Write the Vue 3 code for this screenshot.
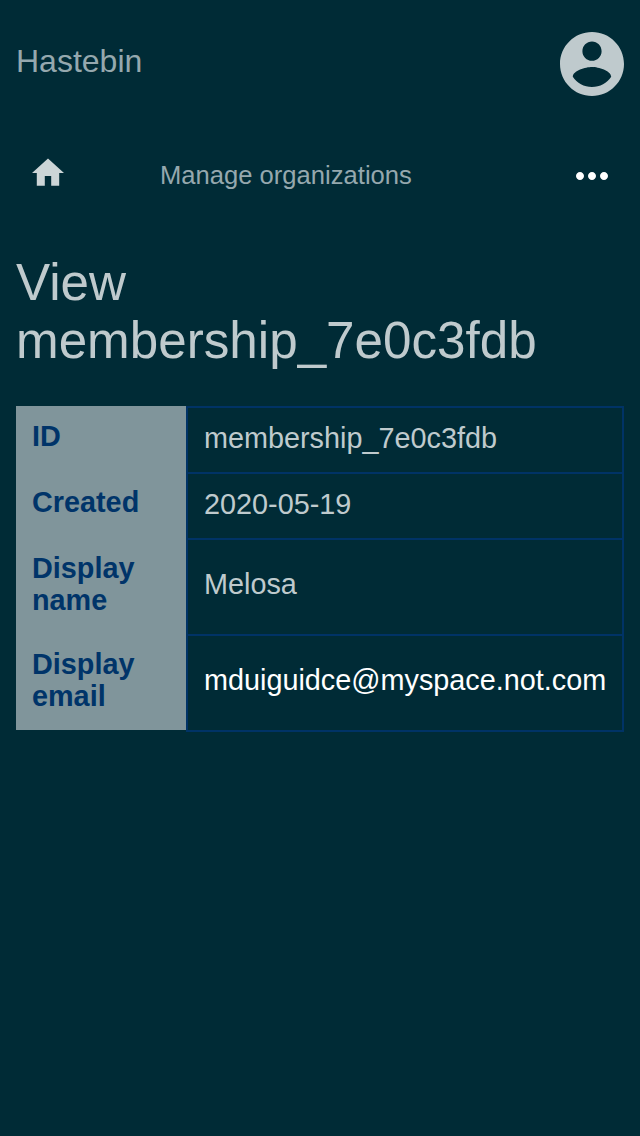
<script setup>
const rows = [
  { label: 'ID', value: 'membership_7e0c3fdb' },
  { label: 'Created', value: '2020-05-19' },
  { label: 'Display name', value: 'Melosa', tall: true },
  { label: 'Display email', value: 'mduiguidce@myspace.not.com', tall: true, link: true },
]
</script>

<template>
  <div class="page">
    <header class="top">
      <span class="brand">Hastebin</span>
      <svg class="account" viewBox="2 2 20 20">
        <path d="M12 2C6.48 2 2 6.48 2 12s4.48 10 10 10 10-4.48 10-10S17.52 2 12 2zm0 3c1.66 0 3 1.34 3 3s-1.34 3-3 3-3-1.34-3-3 1.34-3 3-3zm0 14.2c-2.5 0-4.71-1.28-6-3.22.03-1.99 4-3.08 6-3.08 1.99 0 5.97 1.09 6 3.08-1.29 1.94-3.5 3.22-6 3.22z" />
      </svg>
    </header>
    <nav class="nav">
      <svg class="home" viewBox="2 2.7 20 17.5"><path d="M10 20v-6h4v6h5v-8h3L12 3 2 12h3v8z" /></svg>
      <span class="crumb">Manage organizations</span>
      <svg class="more" viewBox="4 10 16 4"><path d="M6 10c-1.1 0-2 .9-2 2s.9 2 2 2 2-.9 2-2-.9-2-2-2zm12 0c-1.1 0-2 .9-2 2s.9 2 2 2 2-.9 2-2-.9-2-2-2zm-6 0c-1.1 0-2 .9-2 2s.9 2 2 2 2-.9 2-2-.9-2-2-2z" /></svg>
    </nav>
    <h1>View membership_7e0c3fdb</h1>
    <dl class="details">
      <template v-for="row in rows" :key="row.label">
        <dt>{{ row.label }}</dt>
        <dd :class="{ link: row.link, tall: row.tall }">{{ row.value }}</dd>
      </template>
    </dl>
  </div>
</template>

<style>
body { background: #002b36; }
</style>

<style scoped>
.page {
  box-sizing: border-box;
  min-height: 1136px;
  padding: 32px 16px 0;
  background: #002b36;
  color: #bfcacd;
  font-family: "Liberation Sans", Arial, sans-serif;
}
.top { display: flex; justify-content: space-between; height: 64px; }
.brand { font-size: 32px; line-height: 58px; color: #95a8ae; }
.account { width: 64px; height: 64px; fill: #bfcacd; }
.nav { display: flex; align-items: center; height: 64px; margin-top: 48px; padding: 0 16px; }
.home { width: 32px; height: 28px; margin-top: -8px; fill: #ccd5d7; }
.crumb { flex: 1; margin-left: 96px; padding-bottom: 2px; font-size: 25.6px; line-height: 32px; color: #95a8ae; }
.more { width: 32px; height: 8px; fill: #fff; }
h1 { margin: 46px 0 0; font-size: 51.2px; line-height: 58px; font-weight: 400; }
.details {
  display: grid;
  grid-template-columns: 170px 438px;
  grid-template-rows: 66px 66px 96px 98px;
  margin: 36px 0 0;
  font-size: 28.8px;
  line-height: 32px;
}
dt { padding: 14px 16px; background: #80959b; color: #003469; font-weight: 700; }
dt:nth-last-child(2) { margin-bottom: 2px; }
dd { margin: 0; padding: 14px 16px 0; border: 2px solid #003366; border-bottom: 0; }
dd.tall { padding-top: 28px; }
dd:last-child { border-bottom: 2px solid #003366; }
.link { color: #fff; }
</style>
